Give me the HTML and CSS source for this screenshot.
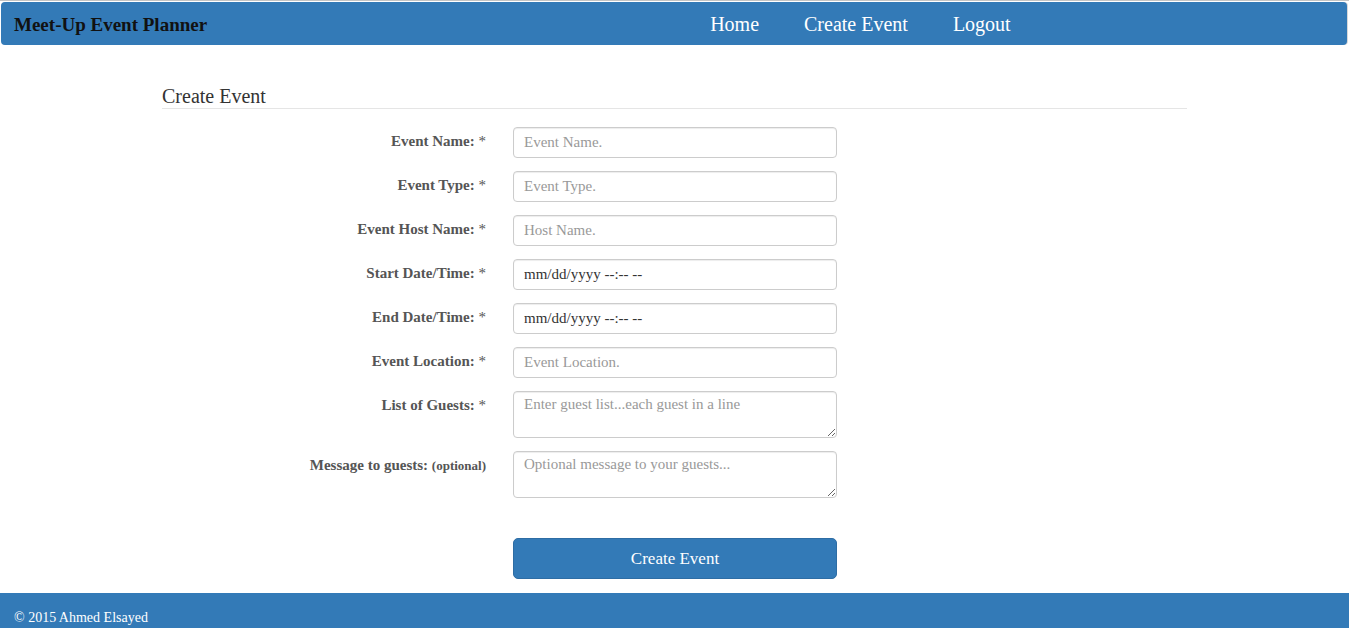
FILE: index.html
```html
<!DOCTYPE html>
<html>
<head>
<meta charset="utf-8">
<title>Meet-Up Event Planner</title>
<link rel="stylesheet" href="styles.css">
</head>
<body>
<header class="navbar">
  <div class="brand">Meet-Up Event Planner</div>
  <nav class="nav">
    <a href="#">Home</a>
    <a href="#">Create Event</a>
    <a href="#">Logout</a>
  </nav>
</header>
<main class="container">
  <h2 class="title">Create Event</h2>
  <form class="form">
    <label class="label">Event Name: <span class="req">*</span></label>
    <input class="field" type="text" placeholder="Event Name.">
    <label class="label">Event Type: <span class="req">*</span></label>
    <input class="field" type="text" placeholder="Event Type.">
    <label class="label">Event Host Name: <span class="req">*</span></label>
    <input class="field" type="text" placeholder="Host Name.">
    <label class="label">Start Date/Time: <span class="req">*</span></label>
    <input class="field" type="text" value="mm/dd/yyyy --:-- --">
    <label class="label">End Date/Time: <span class="req">*</span></label>
    <input class="field" type="text" value="mm/dd/yyyy --:-- --">
    <label class="label">Event Location: <span class="req">*</span></label>
    <input class="field" type="text" placeholder="Event Location.">
    <label class="label label-area">List of Guests: <span class="req">*</span></label>
    <textarea class="field area" placeholder="Enter guest list...each guest in a line"></textarea>
    <label class="label label-area">Message to guests: <small class="opt">(optional)</small></label>
    <textarea class="field area" placeholder="Optional message to your guests..."></textarea>
    <span></span>
    <button class="btn" type="button">Create Event</button>
  </form>
</main>
<footer class="footer">© 2015 Ahmed Elsayed</footer>
</body>
</html>
```
FILE: styles.css
```css
html, body {
  margin: 0;
  padding: 0;
}
body {
  font-family: "Liberation Serif", "DejaVu Serif", serif;
  color: #333;
  background: #fff;
  border-top: 1px solid #c4c4c4;
  overflow: hidden;
  height: 627px;
  display: flex;
  flex-direction: column;
}
.navbar {
  margin: 1px 2px 0 1px;
  height: 43px;
  background: #337ab7;
  border-radius: 4px;
  display: flex;
  align-items: center;
  padding: 2px 13px 0;
  box-sizing: border-box;
  box-shadow: 1px 0 0 #d8d8d8;
}
.brand {
  font-weight: bold;
  font-size: 19px;
  color: #111;
}
.nav {
  display: flex;
  gap: 45px;
  margin-left: 503px;
}
.nav a {
  color: #fff;
  text-decoration: none;
  font-size: 20px;
}
.container {
  width: 1025px;
  margin: 0 auto;
  flex: 1;
}
.title {
  font-weight: normal;
  font-size: 20px;
  margin: 40px 0 0;
  padding-bottom: 0;
  border-bottom: 1px solid #e5e5e5;
  color: #333;
}
.form {
  display: grid;
  grid-template-columns: 324px 324px;
  column-gap: 27px;
  row-gap: 13px;
  margin-top: 18px;
}
.label {
  text-align: right;
  font-weight: bold;
  font-size: 15px;
  color: #555;
  padding-top: 6px;
}
.req {
  font-weight: normal;
  color: #555;
}
.opt {
  font-size: 13px;
}
.field {
  box-sizing: border-box;
  height: 31px;
  border: 1px solid #ccc;
  border-radius: 4px;
  padding: 5px 10px;
  font-family: "Liberation Serif", "DejaVu Serif", serif;
  font-size: 15px;
  color: #333;
  box-shadow: inset 0 1px 1px rgba(0,0,0,.075);
  margin: 0;
}
.field::placeholder {
  color: #999;
}
.area {
  height: 47px;
  resize: vertical;
  padding-top: 4px;
}
.btn {
  margin-top: 27px;
  height: 41px;
  background: #337ab7;
  border: 1px solid #2e6da4;
  border-radius: 5px;
  color: #fff;
  font-family: "Liberation Serif", "DejaVu Serif", serif;
  font-size: 17px;
}
.footer {
  background: #337ab7;
  color: #fff;
  font-size: 14px;
  height: 35px;
  box-sizing: border-box;
  padding: 17px 14px 0;
}
```
